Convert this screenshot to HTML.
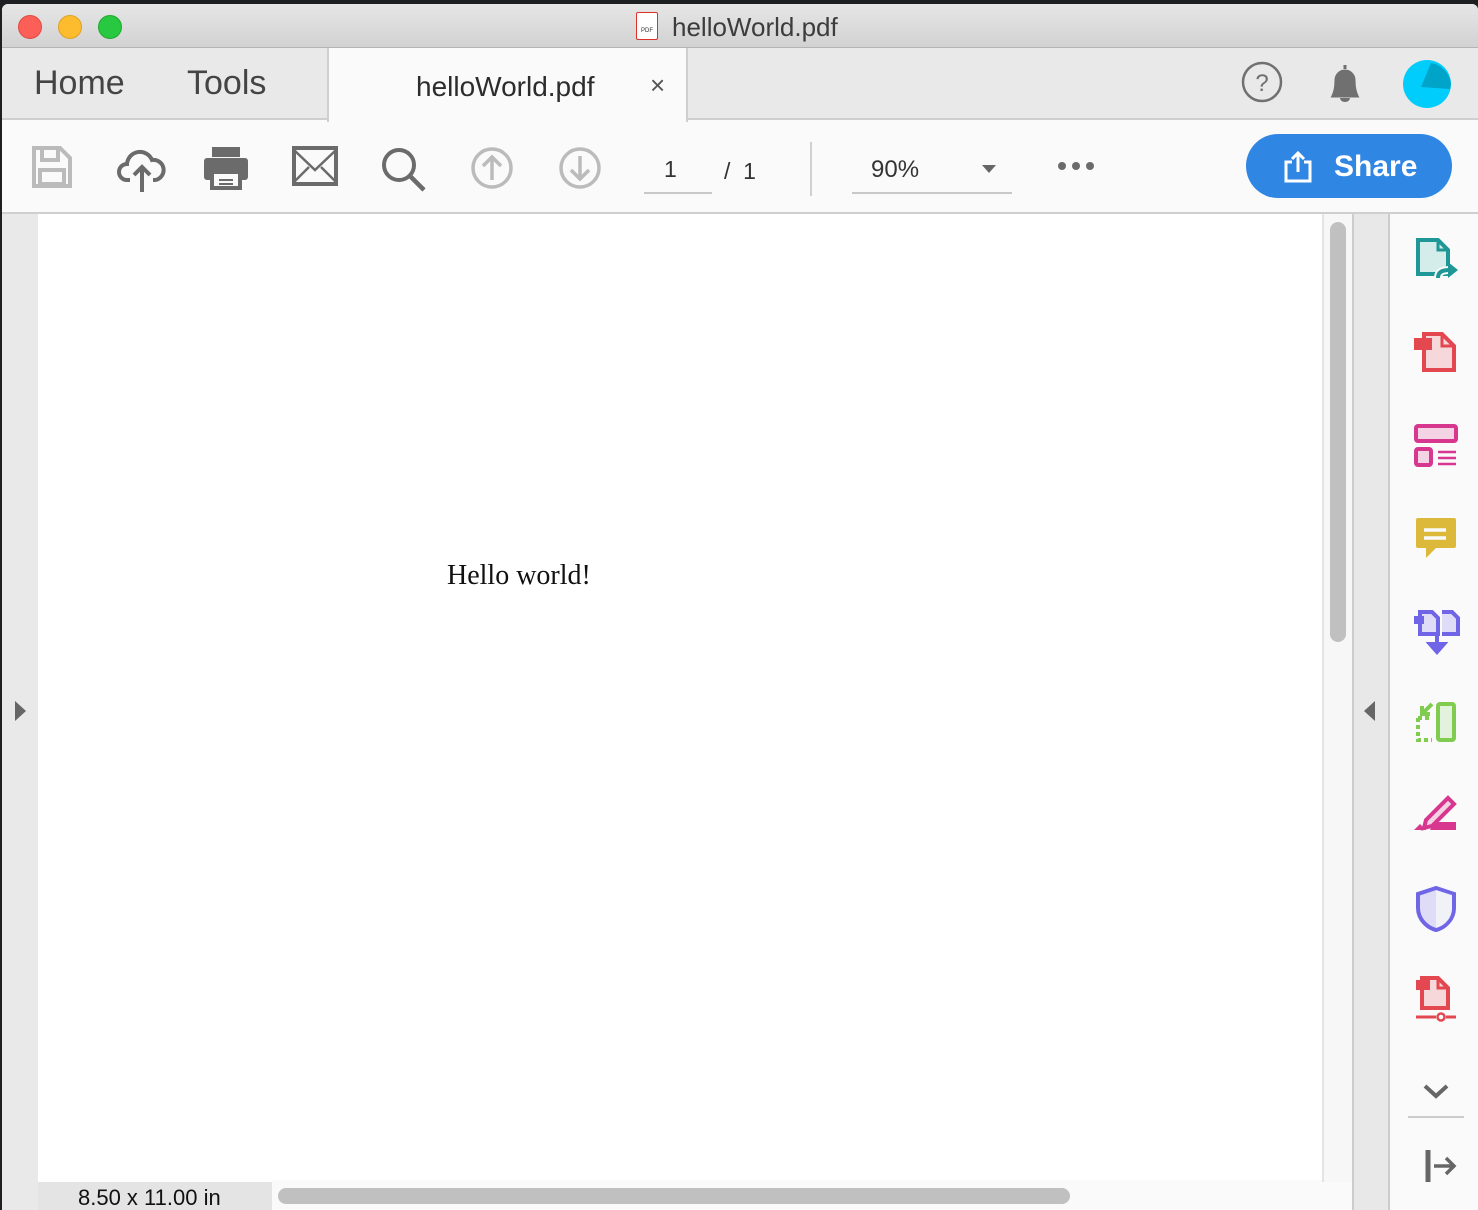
<!DOCTYPE html>
<html><head><meta charset="utf-8"><style>
*{margin:0;padding:0;box-sizing:border-box}
body{width:1478px;height:1210px;overflow:hidden;background:#1e1f23;font-family:"Liberation Sans",sans-serif;position:relative}
.a{position:absolute}
</style></head><body>
<div class="a" style="left:2px;top:4px;width:1476px;height:1206px;background:#fafafa;border-radius:6px 6px 0 0;overflow:hidden">
 <div class="a" style="left:0;top:0;width:1476px;height:44px;background:linear-gradient(#e6e6e6,#d2d2d2);border-bottom:1px solid #b4b4b4"></div>
 <div class="a" style="left:16px;top:11px;width:24px;height:24px;border-radius:50%;background:#fc5f57;border:1px solid #de4a41"></div>
 <div class="a" style="left:56px;top:11px;width:24px;height:24px;border-radius:50%;background:#fdbc2e;border:1px solid #dea123"></div>
 <div class="a" style="left:96px;top:11px;width:24px;height:24px;border-radius:50%;background:#28c840;border:1px solid #1eaa30"></div>
 <div class="a" style="left:634px;top:8px;width:22px;height:28px;background:#fff;border:1.5px solid #e0302a;border-radius:2px;font-size:6px;color:#333;text-align:center;padding-top:15px">PDF</div>
 <div class="a" style="left:670px;top:8px;font-size:26px;color:#3c3c3c">helloWorld.pdf</div>
 <div class="a" style="left:0;top:44px;width:1476px;height:72px;background:#e9e9e9;border-bottom:2px solid #cfcfcf"></div>
 <div class="a" style="left:32px;top:60px;font-size:34px;color:#444">Home</div>
 <div class="a" style="left:185px;top:60px;font-size:34px;color:#444">Tools</div>
 <div class="a" style="left:325px;top:44px;width:361px;height:74px;background:#fafafa;border-left:2px solid #cfcfcf;border-right:2px solid #cfcfcf"></div>
 <div class="a" style="left:414px;top:67px;font-size:28px;color:#2c2c2c">helloWorld.pdf</div>
 <div class="a" style="left:648px;top:66px;font-size:26px;color:#555">×</div>
 <svg class="a" style="left:1238px;top:56px" width="44" height="44"><circle cx="22" cy="22" r="19" fill="none" stroke="#707070" stroke-width="2.5"/><text x="22" y="31" text-anchor="middle" font-size="24" fill="#707070" font-family="Liberation Sans">?</text></svg>
 <svg class="a" style="left:1324px;top:58px" width="38" height="44"><path d="M19 3v4M7 34c2-4 3-8 3-16a9 9 0 0118 0c0 8 1 12 3 16z" fill="#707070" stroke="#707070" stroke-width="3"/><path d="M14 36a5 4 0 0010 0" fill="#707070"/></svg>
 <svg class="a" style="left:1400px;top:55px" width="50" height="50"><circle cx="25" cy="25" r="24" fill="#00cdfc"/><path d="M19 28L29 4A24 24 0 0149 25l-1 5z" fill="#00a4c8"/></svg>
 <div class="a" style="left:0;top:118px;width:1476px;height:92px;background:#fafafa;border-bottom:2px solid #cfcfcf"></div>
 <svg class="a" style="left:28px;top:140px" width="44" height="46"><path d="M4 4h26l10 10v28H4z" fill="none" stroke="#bbb" stroke-width="4"/><rect x="12" y="4" width="16" height="12" fill="none" stroke="#bbb" stroke-width="4"/><rect x="10" y="26" width="24" height="14" fill="none" stroke="#bbb" stroke-width="4"/></svg>
 <svg class="a" style="left:114px;top:140px" width="52" height="50"><path d="M14 36H11a8 8 0 010-16 13 13 0 0125-4 9 9 0 013 20h-2" fill="none" stroke="#6b6b6b" stroke-width="4"/><path d="M26 48V24M18 31l8-8 8 8" fill="none" stroke="#6b6b6b" stroke-width="4"/></svg>
 <svg class="a" style="left:200px;top:140px" width="50" height="48"><rect x="10" y="3" width="28" height="10" fill="#6b6b6b"/><rect x="2" y="14" width="44" height="22" rx="3" fill="#6b6b6b"/><rect x="10" y="28" width="28" height="16" fill="#fafafa" stroke="#6b6b6b" stroke-width="4"/><path d="M17 36h14M17 40h14" stroke="#6b6b6b" stroke-width="2"/></svg>
 <svg class="a" style="left:290px;top:142px" width="46" height="40"><rect x="2" y="2" width="42" height="36" fill="none" stroke="#6b6b6b" stroke-width="4"/><path d="M2 4l21 20 21-20M2 36l15-15M44 36l-15-15" fill="none" stroke="#6b6b6b" stroke-width="2.5"/></svg>
 <svg class="a" style="left:378px;top:142px" width="50" height="50"><circle cx="19" cy="19" r="15" fill="none" stroke="#6b6b6b" stroke-width="4"/><path d="M30 30l14 14" stroke="#6b6b6b" stroke-width="4.5"/></svg>
 <svg class="a" style="left:468px;top:142px" width="44" height="44"><circle cx="22" cy="22" r="19" fill="none" stroke="#bbb" stroke-width="3.5"/><path d="M22 34V11M13 20l9-9 9 9" fill="none" stroke="#bbb" stroke-width="3.5"/></svg>
 <svg class="a" style="left:556px;top:142px" width="44" height="44"><circle cx="22" cy="22" r="19" fill="none" stroke="#bbb" stroke-width="3.5"/><path d="M22 10v23M13 24l9 9 9-9" fill="none" stroke="#bbb" stroke-width="3.5"/></svg>
 <div class="a" style="left:662px;top:152px;font-size:23px;color:#333">1</div>
 <div class="a" style="left:642px;top:188px;width:68px;height:2px;background:#c8c8c8"></div>
 <div class="a" style="left:722px;top:154px;font-size:23px;color:#333">/&nbsp; 1</div>
 <div class="a" style="left:808px;top:138px;width:2px;height:54px;background:#d0d0d0"></div>
 <div class="a" style="left:869px;top:152px;font-size:24px;color:#333">90%</div>
 <div class="a" style="left:980px;top:161px;width:0;height:0;border-left:7px solid transparent;border-right:7px solid transparent;border-top:8px solid #666"></div>
 <div class="a" style="left:850px;top:188px;width:160px;height:2px;background:#c8c8c8"></div>
 <svg class="a" style="left:1054px;top:156px" width="40" height="12"><circle cx="6" cy="6" r="4" fill="#6b6b6b"/><circle cx="20" cy="6" r="4" fill="#6b6b6b"/><circle cx="34" cy="6" r="4" fill="#6b6b6b"/></svg>
 <div class="a" style="left:1244px;top:130px;width:206px;height:64px;border-radius:32px;background:#2f86e3"></div>
 <svg class="a" style="left:1280px;top:146px" width="32" height="34"><path d="M10 12H4v19h24V12h-6M16 22V3M10 9l6-6 6 6" fill="none" stroke="#fff" stroke-width="3"/></svg>
 <div class="a" style="left:1332px;top:146px;font-size:30px;font-weight:bold;color:#fff">Share</div>
 <div class="a" style="left:0;top:210px;width:36px;height:996px;background:#e9e9e9"></div>
 <div class="a" style="left:13px;top:697px;border-top:10px solid transparent;border-bottom:10px solid transparent;border-left:11px solid #666"></div>
 <div class="a" style="left:36px;top:210px;width:1284px;height:968px;background:#fff"></div>
 <div class="a" style="left:445px;top:556px;font-family:'Liberation Serif',serif;font-size:28px;color:#111">Hello world!</div>
 <div class="a" style="left:1320px;top:210px;width:30px;height:968px;background:#f7f7f7;border-left:2px solid #e4e4e4"></div>
 <div class="a" style="left:1328px;top:218px;width:16px;height:420px;border-radius:8px;background:#c0c0c0"></div>
 <div class="a" style="left:1350px;top:210px;width:38px;height:996px;background:#e8e8e8;border-left:2px solid #ccc;border-right:2px solid #ccc"></div>
 <div class="a" style="left:1362px;top:697px;border-top:10px solid transparent;border-bottom:10px solid transparent;border-right:11px solid #666"></div>
 <div class="a" style="left:36px;top:1178px;width:234px;height:28px;background:#e4e4e4"></div>
 <div class="a" style="left:76px;top:1181px;font-size:22px;color:#111">8.50 x 11.00 in</div>
 <div class="a" style="left:270px;top:1176px;width:1050px;height:30px;background:#fafafa"></div>
 <div class="a" style="left:276px;top:1184px;width:792px;height:16px;border-radius:8px;background:#c0c0c0"></div>
 <svg class="a" style="left:1410px;top:232px" width="50" height="52"><path d="M6 4h20l10 10v24H6z" fill="#d4ecea" stroke="#1e9796" stroke-width="4"/><path d="M26 4v10h10" fill="none" stroke="#1e9796" stroke-width="3"/><path d="M26 42c0-6 4-8 12-8" fill="none" stroke="#fafafa" stroke-width="8"/><path d="M26 42c0-6 4-8 12-8" fill="none" stroke="#1e9796" stroke-width="4"/><path d="M36 26l10 8-10 8z" fill="#1e9796"/></svg>
 <svg class="a" style="left:1410px;top:324px" width="46" height="50"><path d="M12 6h18l12 12v24H12z" fill="#f6d8da" stroke="#e34850" stroke-width="4"/><path d="M30 6v12h12" fill="none" stroke="#e34850" stroke-width="3"/><rect x="2" y="10" width="18" height="12" fill="#e34850"/></svg>
 <svg class="a" style="left:1410px;top:418px" width="48" height="48"><rect x="4" y="4" width="40" height="15" rx="2" fill="#f3d3e4" stroke="#d83790" stroke-width="4"/><rect x="4" y="27" width="15" height="16" rx="2" fill="#f3d3e4" stroke="#d83790" stroke-width="4"/><path d="M26 30h18M26 36h18M26 42h18" stroke="#d83790" stroke-width="2.5"/></svg>
 <svg class="a" style="left:1412px;top:512px" width="44" height="46"><path d="M2 4q0-2 2-2h36q2 0 2 2v26q0 2-2 2H22l-10 10v-10H4q-2 0-2-2z" fill="#dcb93a"/><path d="M10 14h22M10 22h22" stroke="#fafafa" stroke-width="3.5"/></svg>
 <svg class="a" style="left:1410px;top:604px" width="50" height="50"><path d="M8 4h12l6 6v16H8zM30 4h10l6 6v16H30" fill="#dedcf6" stroke="#6f65e6" stroke-width="4"/><rect x="2" y="8" width="10" height="8" fill="#6f65e6"/><path d="M25 26v14M18 36l7 8 7-8z" fill="#6f65e6" stroke="#6f65e6" stroke-width="4"/></svg>
 <svg class="a" style="left:1410px;top:696px" width="48" height="46"><rect x="26" y="4" width="16" height="36" rx="2" fill="#e3f2dc" stroke="#7fcc50" stroke-width="4"/><path d="M6 18h14M6 18v22h14" fill="none" stroke="#7fcc50" stroke-width="4" stroke-dasharray="4 3"/><path d="M20 4l-10 10M10 6v8h8" fill="none" stroke="#7fcc50" stroke-width="4"/></svg>
 <svg class="a" style="left:1410px;top:790px" width="48" height="42"><path d="M36 4l6 6-22 22-8 2 2-8z" fill="#f3d3e4" stroke="#d83790" stroke-width="4"/><path d="M2 36l6-6 6 6z M22 28h22v8H18z" fill="#d83790"/></svg>
 <svg class="a" style="left:1412px;top:880px" width="44" height="50"><path d="M22 4L4 10v14c0 12 10 20 18 22 8-2 18-10 18-22V10z" fill="#dedcf6" stroke="#6f65e6" stroke-width="4"/><path d="M22 6L38 11v13c0 11-8 18-16 20z" fill="#fafafa" opacity=".7"/></svg>
 <svg class="a" style="left:1412px;top:968px" width="48" height="52"><path d="M8 6h16l10 10v20H8z" fill="#f6d8da" stroke="#e34850" stroke-width="4"/><path d="M24 6v10h10" fill="none" stroke="#e34850" stroke-width="3"/><rect x="2" y="8" width="14" height="10" fill="#e34850"/><path d="M2 45h20M32 45h10" stroke="#e34850" stroke-width="3"/><circle cx="27" cy="45" r="3.5" fill="none" stroke="#e34850" stroke-width="2.5"/></svg>
 <svg class="a" style="left:1420px;top:1078px" width="28" height="18"><path d="M3 4l11 10 11-10" fill="none" stroke="#666" stroke-width="4"/></svg>
 <div class="a" style="left:1406px;top:1112px;width:56px;height:2px;background:#ccc"></div>
 <svg class="a" style="left:1422px;top:1144px" width="36" height="36"><path d="M4 2v32" stroke="#666" stroke-width="5"/><path d="M10 18h20M22 10l8 8-8 8" fill="none" stroke="#666" stroke-width="3.5"/></svg>
</div>
</body></html>
